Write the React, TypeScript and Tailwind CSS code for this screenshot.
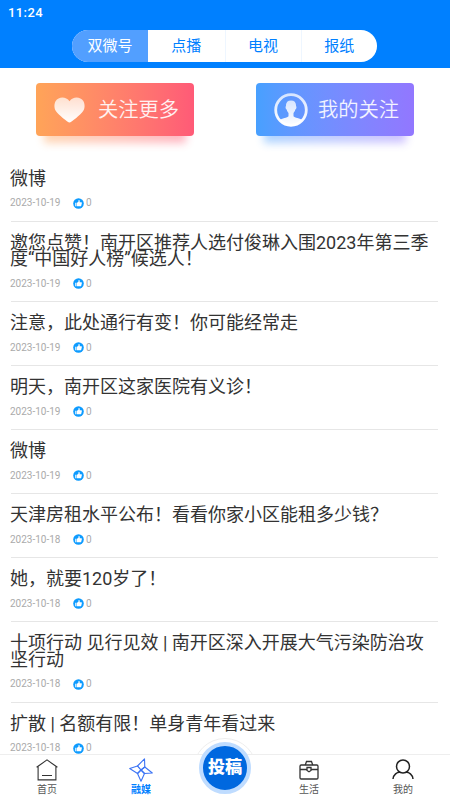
import React from 'react';

interface Article {
  title: string;
  date: string;
  likes: number;
}

const CHANNELS = ['双微号', '点播', '电视', '报纸'];

const ARTICLES: Article[] = [
  { title: '微博', date: '2023-10-19', likes: 0 },
  { title: '邀您点赞！南开区推荐人选付俊琳入围2023年第三季度“中国好人榜”候选人！', date: '2023-10-19', likes: 0 },
  { title: '注意，此处通行有变！你可能经常走', date: '2023-10-19', likes: 0 },
  { title: '明天，南开区这家医院有义诊！', date: '2023-10-19', likes: 0 },
  { title: '微博', date: '2023-10-19', likes: 0 },
  { title: '天津房租水平公布！看看你家小区能租多少钱？', date: '2023-10-18', likes: 0 },
  { title: '她，就要120岁了！', date: '2023-10-18', likes: 0 },
  { title: '十项行动 见行见效 | 南开区深入开展大气污染防治攻坚行动', date: '2023-10-18', likes: 0 },
  { title: '扩散 | 名额有限！单身青年看过来', date: '2023-10-18', likes: 0 },
];

// --- Icons ---
const LikeIcon = () => (
  <svg width="11" height="11" viewBox="0 0 22 22">
    <circle cx="11" cy="11" r="10.6" fill="#0d9bff" />
    <path d="M4.500 9.500h2.500v7H4.500zM8 9.500l2.800-2.200.4-3.300c2-.4 2.700 1 2.100 4.400h3.300c1 0 1.400.7 1.200 1.500l-1.300 5.400c-.2.800-.7 1.200-1.500 1.200H8z" fill="#fff" />
  </svg>
);

const HeartIcon = () => (
  <svg width="31" height="26" viewBox="0 0 31 26">
    <defs>
      <linearGradient id="heart" x1="0" y1="0" x2="0" y2="1">
        <stop offset="0" stopColor="#fff" stopOpacity="0.7" />
        <stop offset="1" stopColor="#fff" />
      </linearGradient>
    </defs>
    <path d="M15.5 25.5C13.8 25.5 4.5 17.5 2 14.2-.3 11.1.2 6.5 1.700 4 4.500-.6 12-1 15.500 4.200 19-1 26.500-.6 29.300 4c1.500 2.500 2 7.100-.3 10.200C26.500 17.500 17.200 25.500 15.500 25.500z" fill="url(#heart)" />
  </svg>
);

const AvatarIcon = () => (
  <svg width="34" height="34" viewBox="0 0 34 34">
    <defs>
      <linearGradient id="avatar" x1="0" y1="0" x2="0" y2="1">
        <stop offset="0" stopColor="#fff" stopOpacity="0.75" />
        <stop offset="1" stopColor="#fff" />
      </linearGradient>
      <clipPath id="avatarClip">
        <circle cx="17" cy="17" r="15" />
      </clipPath>
    </defs>
    <circle cx="17" cy="17" r="15.300" fill="none" stroke="url(#avatar)" strokeWidth="2.800" />
    <path clipPath="url(#avatarClip)" d="M17 7.500c-3.600 0-5.300 2.300-5 5.600-.9.500-.3 3.200.7 3.500.4 1.700 1 2.600 1.800 3.300v3.300c-1 1.600-6.500 1.700-9.500 4.300L9 34h16l4-6.500c-3-2.600-8.500-2.700-9.500-4.300v-3.300c.8-.7 1.400-1.600 1.800-3.300 1-.3 1.600-3 .7-3.500.3-3.300-1.400-5.600-5-5.600z" fill="url(#avatar)" />
  </svg>
);

const HomeIcon = () => (
  <svg width="22" height="22" viewBox="0 0 22 22" fill="none" stroke="#333" strokeWidth="1.100">
    <path d="M.6 8.300 11 .9l10.400 7.400M2.100 7.500v13.400h17.800V7.500M6 16.500h10" />
  </svg>
);

const PinwheelIcon = () => (
  <svg width="24" height="24" viewBox="0 0 24 24" fill="none" stroke="#3c74f5" strokeWidth="1.100" strokeLinejoin="round">
    <path d="M12 12 8.500 8 15.500.8 15.800 9z" />
    <path d="M12 12 15.800 9 23.300 15 15.500 15.500z" />
    <path d="M12 12 15.500 15.500 12 23.200 8.500 15.500z" />
    <path d="M12 12 8.500 15.500.7 10.500 8.500 8z" />
  </svg>
);

const BriefcaseIcon = () => (
  <svg width="20" height="20" viewBox="0 0 20 20" fill="none" stroke="#333" strokeWidth="1.300">
    <rect x="1" y="5" width="18" height="14" rx="1.200" />
    <path d="M6.300 5 7.500 1.500h5L13.700 5M1 9.500h7M12 9.500h7" />
    <path d="M8 7.500h4v3l-2 1.300-2-1.300z" />
  </svg>
);

const PersonIcon = () => (
  <svg width="22" height="21" viewBox="0 0 22 21" fill="none" stroke="#222" strokeWidth="1.500">
    <circle cx="11" cy="7.500" r="6.500" />
    <path d="M1 20c.5-4.500 4-7 7.200-6.700M21 20c-.5-4.500-4-7-7.200-6.700" />
  </svg>
);

const ArticleRow: React.FC<{ article: Article }> = ({ article }) => (
  <li className="ml-[11px] mr-3 border-b border-[#e6e6e6] pt-[13px] pb-[11.500px]">
    <h2 className="-ml-px text-[18px] leading-[16.5px] text-[#333]">{article.title}</h2>
    <div className="mt-[10px] -ml-px flex h-3 items-center text-[10px] leading-3 text-[#aaa]">
      <span className="w-[63px]">{article.date}</span>
      <LikeIcon />
      <span className="ml-[2px]">{article.likes}</span>
    </div>
  </li>
);

const TabItem: React.FC<{ label: string; className?: string; children: React.ReactNode }> = ({ label, className = 'text-[#555]', children }) => (
  <button className={`flex flex-col items-center text-[10px] leading-3 ${className}`}>
    <span className="flex h-[25px] items-center justify-center">{children}</span>
    <span className="mt-[2px]">{label}</span>
  </button>
);

export default function App() {
  return (
    <div className="flex h-[800px] w-[450px] flex-col overflow-hidden bg-white font-['Roboto','Noto_Sans_CJK_SC',sans-serif]">
      {/* Header */}
      <header className="h-[68px] shrink-0 bg-[#0080ff]">
        <div className="flex h-[30px] items-center pl-2 pb-[4px] text-[13px] font-medium tracking-[0.4px] text-white">11:24</div>
        <nav className="ml-[72px] grid h-8 w-[305px] grid-cols-4 overflow-hidden rounded-full bg-white text-[15px] text-[#0080ff]">
          {CHANNELS.map((name, i) => (
            <button
              key={name}
              className={`pt-px ${i === 0 ? 'bg-[#529fff] text-white' : i === 1 ? '' : 'border-l border-[#eef6ff]'}`}
            >
              {name}
            </button>
          ))}
        </nav>
      </header>

      {/* Follow banners */}
      <section className="flex h-[89.500px] shrink-0 justify-between pt-[15px] pr-9 pl-9">
        <div className="relative h-[53px] w-[158px]">
          <div className="absolute top-[40px] left-2 h-[20px] w-[142px] bg-linear-to-r from-[#ffa458] to-[#ff5a77] opacity-45 blur-[4px]" />
          <button className="relative flex h-full w-full items-center rounded-[4px] bg-linear-to-r from-[#ffa458] to-[#ff5a77] pl-[18px] text-[20.300px] font-[350] text-white/90">
            <HeartIcon />
            <span className="ml-[13px] pt-[2px]">关注更多</span>
          </button>
        </div>
        <div className="relative h-[53px] w-[158px]">
          <div className="absolute top-[40px] left-2 h-[20px] w-[142px] bg-linear-to-r from-[#47a0ff] to-[#9277ff] opacity-45 blur-[4px]" />
          <button className="relative flex h-full w-full items-center rounded-[4px] bg-linear-to-r from-[#47a0ff] to-[#9277ff] pl-[18px] text-[20.300px] font-[350] text-white/90">
            <AvatarIcon />
            <span className="ml-[10px] pt-[2px]">我的关注</span>
          </button>
        </div>
      </section>

      {/* Articles */}
      <ul className="min-h-0 flex-1 overflow-hidden">
        {ARTICLES.map((article, i) => (
          <ArticleRow key={i} article={article} />
        ))}
      </ul>

      {/* Bottom tabs */}
      <footer className="relative h-[46px] shrink-0 border-t border-[#eee] bg-white">
        <div className="absolute -top-[17px] left-[193px] h-[16px] w-[64px] overflow-hidden">
          <div className="h-[64px] w-[64px] rounded-full border border-[#eee] bg-white" />
        </div>
        <div className="grid h-full grid-cols-[94px_94px_74px_94px_94px] pt-[2px]">
          <TabItem label="首页">
            <HomeIcon />
          </TabItem>
          <TabItem label="融媒" className="font-bold text-[#0080ff]">
            <PinwheelIcon />
          </TabItem>
          <span />
          <TabItem label="生活">
            <BriefcaseIcon />
          </TabItem>
          <TabItem label="我的">
            <PersonIcon />
          </TabItem>
        </div>
        <button className="absolute -top-[13px] left-[199px] flex h-[52px] w-[52px] items-center justify-center rounded-full border-4 border-[#bfdcff] bg-[#0068df] text-[17px] font-black text-white">
          投稿
        </button>
      </footer>
    </div>
  );
}
